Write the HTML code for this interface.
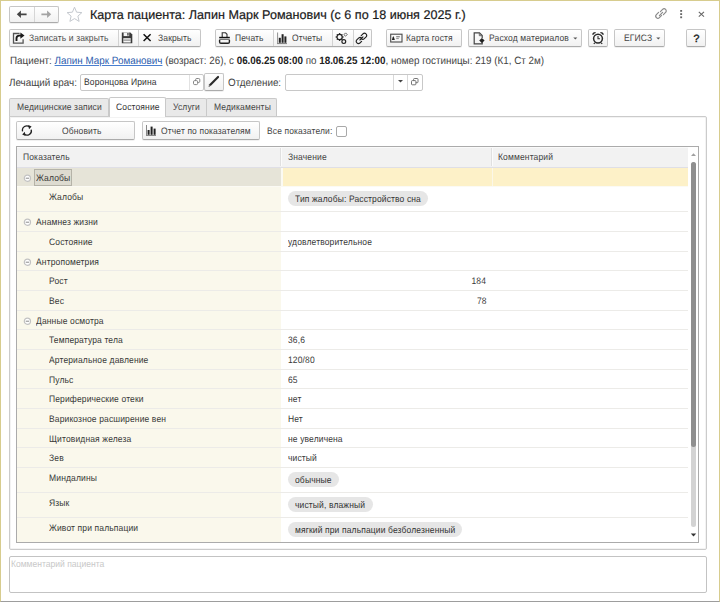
<!DOCTYPE html>
<html><head><meta charset="utf-8"><style>
html,body{margin:0;padding:0;width:720px;height:602px;overflow:hidden;background:#fff}
body{position:relative;font-family:"Liberation Sans", sans-serif;text-rendering:geometricPrecision;}
b{font-weight:700}
</style></head><body>
<div style="position:absolute;left:0;top:0;width:720px;height:602px;box-sizing:border-box;border:1px solid #d7cc8e;border-bottom-color:#9d9d9d;background:#fff"></div>
<div style="position:absolute;left:9px;top:6px;width:50px;height:17px;box-sizing:border-box;border:1px solid #c6c6c6;border-bottom-color:#ababab;border-radius:2px;background:linear-gradient(#ffffff,#f1f1f1);box-shadow:0 1px 0 rgba(0,0,0,0.06);"></div>
<div style="position:absolute;left:34px;top:7px;width:1px;height:15px;background:#d6d6d6"></div>
<svg style="position:absolute;left:16px;top:10px" width="12" height="9" viewBox="0 0 12 9"><path d="M0.8 4.3 L4.9 0.6 L4.9 3.4 L10.6 3.4 L10.6 5.2 L4.9 5.2 L4.9 8.0 Z" fill="#444"/></svg>
<svg style="position:absolute;left:40px;top:10px" width="12" height="9" viewBox="0 0 12 9"><path d="M11.2 4.3 L7.1 0.6 L7.1 3.4 L1.4 3.4 L1.4 5.2 L7.1 5.2 L7.1 8.0 Z" fill="#a3a3a3"/></svg>
<svg style="position:absolute;left:66px;top:6px" width="17" height="17" viewBox="0 0 17 17"><path d="M8.5 1.2 L10.6 6.2 L15.9 6.6 L11.9 10.1 L13.1 15.4 L8.5 12.6 L3.9 15.4 L5.1 10.1 L1.1 6.6 L6.4 6.2 Z" fill="none" stroke="#c5c9cf" stroke-width="1"/></svg>
<div style="position:absolute;left:90px;top:8px;font-size:12.6px;line-height:14.49px;color:#1a1a1a;font-weight:400;white-space:nowrap;-webkit-text-stroke:0.2px #1a1a1a;">Карта пациента: Лапин Марк Романович (с 6 по 18 июня 2025 г.)</div>
<svg style="position:absolute;left:654px;top:7px" width="14" height="13" viewBox="0 0 14 13"><g fill="none" stroke="#8a8a8a" stroke-width="1.2" stroke-linecap="round"><path d="M6.4 4.6 L8.6 2.4 a2.1 2.1 0 0 1 3 3 L9.4 7.6"/><path d="M7.6 8.4 L5.4 10.6 a2.1 2.1 0 0 1 -3 -3 L4.6 5.4"/><path d="M5.4 8.6 L8.6 5.4"/></g></svg>
<svg style="position:absolute;left:679px;top:9px" width="5" height="10" viewBox="0 0 5 10"><g fill="#666"><rect x="1.2" y="1" width="1.9" height="1.8"/><rect x="1.2" y="4.2" width="1.9" height="1.8"/><rect x="1.2" y="7.4" width="1.9" height="1.8"/></g></svg>
<svg style="position:absolute;left:697px;top:10px" width="9" height="8" viewBox="0 0 9 8"><path d="M1.8 1.8 L7.0 6.6 M7.0 1.8 L1.8 6.6" stroke="#666" stroke-width="1.1"/></svg>
<div style="position:absolute;left:9px;top:29px;width:192px;height:18px;box-sizing:border-box;border:1px solid #c6c6c6;border-bottom-color:#ababab;border-radius:2px;background:linear-gradient(#ffffff,#f1f1f1);box-shadow:0 1px 0 rgba(0,0,0,0.06);"></div>
<div style="position:absolute;left:118px;top:30px;width:1px;height:16px;background:#d2d2d2"></div>
<div style="position:absolute;left:138px;top:30px;width:1px;height:16px;background:#d2d2d2"></div>
<div style="position:absolute;left:29px;top:33px;font-size:9.35px;line-height:10.752px;color:#505050;font-weight:400;white-space:nowrap;letter-spacing:0.15px;transform:scaleX(0.9070);transform-origin:0 0;">Записать и закрыть</div>
<div style="position:absolute;left:157.5px;top:33px;font-size:9.35px;line-height:10.752px;color:#444;font-weight:400;white-space:nowrap;letter-spacing:0.15px;transform:scaleX(0.9093);transform-origin:0 0;">Закрыть</div>
<svg style="position:absolute;left:12px;top:32px" width="13" height="12" viewBox="0 0 13 12"><path d="M7.6 1.5 H1.5 V11.1 H11.1 V7.2" fill="none" stroke="#555" stroke-width="1.3"/><path d="M4.5 8.9 V6.2 Q4.5 3.6 7.3 3.6 H9" fill="none" stroke="#1a1a1a" stroke-width="1.9"/><path d="M8.4 0.4 L12.5 3.6 L8.4 6.8 Z" fill="#1a1a1a"/></svg>
<svg style="position:absolute;left:121px;top:32px" width="12" height="12" viewBox="0 0 12 12"><path d="M0.8 0.5 H9.4 L11.3 2.4 V11.3 H0.8 Z" fill="#3a3a3a"/><rect x="2.6" y="0.5" width="5.6" height="3.6" fill="#f4f4f4"/><rect x="6.3" y="1.0" width="1.3" height="2.6" fill="#3a3a3a"/><rect x="2.3" y="6.2" width="7.4" height="4.3" fill="#f6f6f6"/><rect x="2.3" y="7.6" width="7.4" height="1.0" fill="#777"/></svg>
<svg style="position:absolute;left:142px;top:33px" width="10" height="9" viewBox="0 0 10 9"><path d="M1.6 1.2 L8.6 8.0 M8.6 1.2 L1.6 8.0" stroke="#111" stroke-width="1.5"/></svg>
<div style="position:absolute;left:215px;top:29px;width:157px;height:18px;box-sizing:border-box;border:1px solid #c6c6c6;border-bottom-color:#ababab;border-radius:2px;background:linear-gradient(#ffffff,#f1f1f1);box-shadow:0 1px 0 rgba(0,0,0,0.06);"></div>
<div style="position:absolute;left:273px;top:30px;width:1px;height:16px;background:#d2d2d2"></div>
<div style="position:absolute;left:332px;top:30px;width:1px;height:16px;background:#d2d2d2"></div>
<div style="position:absolute;left:353px;top:30px;width:1px;height:16px;background:#d2d2d2"></div>
<div style="position:absolute;left:234.5px;top:33px;font-size:9.35px;line-height:10.752px;color:#444;font-weight:400;white-space:nowrap;letter-spacing:0.15px;transform:scaleX(0.9091);transform-origin:0 0;">Печать</div>
<div style="position:absolute;left:292px;top:33px;font-size:9.35px;line-height:10.752px;color:#444;font-weight:400;white-space:nowrap;letter-spacing:0.15px;transform:scaleX(0.9105);transform-origin:0 0;">Отчеты</div>
<svg style="position:absolute;left:218px;top:31px" width="13" height="14" viewBox="0 0 13 14"><path d="M4.2 6.2 V1.8 H7.6 L9.0 3.3 V6.2" fill="none" stroke="#333" stroke-width="1.1"/><rect x="1.2" y="5.8" width="10.6" height="1.4" fill="#111"/><rect x="1.2" y="7.7" width="10.6" height="1.3" fill="#777"/><path d="M1.6 9 V11 Q1.6 12.3 3 12.3 H10 Q11.4 12.3 11.4 11 V9" fill="none" stroke="#222" stroke-width="1.4"/></svg>
<svg style="position:absolute;left:276px;top:32px" width="12" height="13" viewBox="0 0 12 13"><rect x="1" y="0.5" width="1.1" height="11.5" fill="#999"/><rect x="1" y="11" width="10" height="1.1" fill="#888"/><rect x="2.8" y="5.8" width="2" height="5" fill="#222"/><rect x="5.6" y="2.2" width="2" height="8.6" fill="#222"/><rect x="8.4" y="4.4" width="2" height="6.4" fill="#222"/></svg>
<svg style="position:absolute;left:335px;top:32px" width="13" height="13" viewBox="0 0 13 13"><g fill="none" stroke="#222" stroke-width="1.2"><circle cx="4.6" cy="5.0" r="2.6"/><circle cx="8.8" cy="9.6" r="1.9"/><path d="M8.9 2.6 L10.6 0.9 L12.2 2.5 L10.5 4.2 Z" stroke="#555" stroke-width="0.9"/></g><g fill="#222"><circle cx="4.6" cy="1.7" r="0.8"/><circle cx="4.6" cy="8.3" r="0.8"/><circle cx="1.3" cy="5" r="0.8"/><circle cx="7.9" cy="5" r="0.8"/><circle cx="2.3" cy="2.7" r="0.7"/><circle cx="6.9" cy="2.7" r="0.7"/><circle cx="2.3" cy="7.3" r="0.7"/><circle cx="6.9" cy="7.3" r="0.7"/></g></svg>
<svg style="position:absolute;left:355px;top:32px" width="13" height="13" viewBox="0 0 13 13"><g fill="none" stroke="#222" stroke-width="1.15" stroke-linecap="round"><path d="M6.2 3.6 L8.0 1.8 a2.2 2.2 0 0 1 3.1 3.1 L9.3 6.7 a2.2 2.2 0 0 1 -3.1 0"/><path d="M6.6 9.3 L4.9 11.0 a2.2 2.2 0 0 1 -3.1 -3.1 L3.6 6.1 a2.2 2.2 0 0 1 3.1 0"/><path d="M4.9 8.0 L8.0 4.9"/></g></svg>
<div style="position:absolute;left:386px;top:29px;width:76px;height:18px;box-sizing:border-box;border:1px solid #c6c6c6;border-bottom-color:#ababab;border-radius:2px;background:linear-gradient(#ffffff,#f1f1f1);box-shadow:0 1px 0 rgba(0,0,0,0.06);"></div>
<div style="position:absolute;left:405.5px;top:33px;font-size:9.35px;line-height:10.752px;color:#444;font-weight:400;white-space:nowrap;letter-spacing:0.15px;transform:scaleX(0.9060);transform-origin:0 0;">Карта гостя</div>
<svg style="position:absolute;left:389px;top:33px" width="14" height="10" viewBox="0 0 14 10"><rect x="1.7" y="1.2" width="11.3" height="7.8" fill="none" stroke="#4a4a4a" stroke-width="1.1"/><path d="M2.9 7.0 L3.6 4.6 L4.3 2.9 L5.0 4.6 L5.8 7.0 Z" fill="#222"/><rect x="7.2" y="3.2" width="3.6" height="1.1" fill="#777"/><rect x="7.2" y="5.0" width="2.6" height="1.1" fill="#999"/></svg>
<div style="position:absolute;left:468px;top:29px;width:114px;height:18px;box-sizing:border-box;border:1px solid #c6c6c6;border-bottom-color:#ababab;border-radius:2px;background:linear-gradient(#ffffff,#f1f1f1);box-shadow:0 1px 0 rgba(0,0,0,0.06);"></div>
<div style="position:absolute;left:488.8px;top:33px;font-size:9.35px;line-height:10.752px;color:#444;font-weight:400;white-space:nowrap;letter-spacing:0.15px;transform:scaleX(0.9087);transform-origin:0 0;">Расход материалов</div>
<svg style="position:absolute;left:473px;top:32px" width="12" height="13" viewBox="0 0 12 13"><path d="M9.2 6 V3.5 L6.5 0.8 H1.2 V11.9 H9.2 V9.8" fill="none" stroke="#444" stroke-width="1.2"/><path d="M6.3 0.8 V3.7 H9.2" fill="none" stroke="#666" stroke-width="1"/><path d="M8.9 5.9 L11.6 8.4 L8.9 10.9 L6.2 8.4 Z" fill="#222"/></svg>
<svg style="position:absolute;left:572px;top:36px" width="7" height="5" viewBox="0 0 7 5"><path d="M1.3 1.6 H5.3 L3.3 3.6 Z" fill="#555"/></svg>
<div style="position:absolute;left:588px;top:29px;width:20px;height:18px;box-sizing:border-box;border:1px solid #c6c6c6;border-bottom-color:#ababab;border-radius:2px;background:linear-gradient(#ffffff,#f1f1f1);box-shadow:0 1px 0 rgba(0,0,0,0.06);"></div>
<svg style="position:absolute;left:591px;top:31px" width="14" height="14" viewBox="0 0 14 14"><circle cx="7" cy="7.6" r="4.4" fill="none" stroke="#2a2a2a" stroke-width="1.5"/><path d="M7 5.0 V7.8 H9" fill="none" stroke="#333" stroke-width="1.1"/><path d="M1.6 3.6 Q2.6 1.4 4.6 1.6" fill="none" stroke="#2a2a2a" stroke-width="1.4"/><path d="M12.4 3.6 Q11.4 1.4 9.4 1.6" fill="none" stroke="#2a2a2a" stroke-width="1.4"/><path d="M3.8 11.8 L2.8 12.9 M10.2 11.8 L11.2 12.9" stroke="#2a2a2a" stroke-width="1.2"/></svg>
<div style="position:absolute;left:614px;top:29px;width:51px;height:18px;box-sizing:border-box;border:1px solid #c6c6c6;border-bottom-color:#ababab;border-radius:2px;background:linear-gradient(#ffffff,#f1f1f1);box-shadow:0 1px 0 rgba(0,0,0,0.06);"></div>
<div style="position:absolute;left:623.8px;top:33px;font-size:9.35px;line-height:10.752px;color:#444;font-weight:400;white-space:nowrap;letter-spacing:0.15px;transform:scaleX(0.9132);transform-origin:0 0;">ЕГИСЗ</div>
<svg style="position:absolute;left:655px;top:36px" width="7" height="5" viewBox="0 0 7 5"><path d="M1.3 1.6 H5.3 L3.3 3.6 Z" fill="#555"/></svg>
<div style="position:absolute;left:686px;top:29px;width:20px;height:18px;box-sizing:border-box;border:1px solid #c6c6c6;border-bottom-color:#ababab;border-radius:2px;background:linear-gradient(#ffffff,#f1f1f1);box-shadow:0 1px 0 rgba(0,0,0,0.06);"></div>
<div style="position:absolute;left:693.6px;top:33px;font-size:10.6px;line-height:12.19px;color:#222;font-weight:400;white-space:nowrap;-webkit-text-stroke:0.45px #222;">?</div>
<div style="position:absolute;left:10px;top:55px;font-size:10.6px;line-height:12.19px;color:#444;font-weight:400;white-space:nowrap;letter-spacing:0px;transform:scaleX(0.9292);transform-origin:0 0;">Пациент: <span style="color:#2c5cad;text-decoration:underline;text-decoration-color:#4a7fd0">Лапин Марк Романович</span> (возраст: 26), с <b style="color:#222">06.06.25 08:00</b> по <b style="color:#222">18.06.25 12:00</b>, номер гостиницы: 219 (К1, Ст 2м)</div>
<div style="position:absolute;left:9.2px;top:77px;font-size:10.6px;line-height:12.19px;color:#444;font-weight:400;white-space:nowrap;letter-spacing:0px;transform:scaleX(0.9292);transform-origin:0 0;">Лечащий врач:</div>
<div style="position:absolute;left:80px;top:73.5px;width:124px;height:17px;box-sizing:border-box;border:1px solid #c8c8c8;border-radius:2px;background:#fff;"></div>
<div style="position:absolute;left:189px;top:74.5px;width:1px;height:15px;background:#e2e2e2"></div>
<svg style="position:absolute;left:192px;top:77px" width="10" height="10" viewBox="0 0 10 10"><g fill="none" stroke="#777" stroke-width="0.9"><rect x="3.6" y="1.5" width="4.2" height="4" rx="1.2"/><rect x="1.5" y="3.6" width="4.2" height="4" rx="1.2" fill="#fff"/></g></svg>
<div style="position:absolute;left:83.8px;top:77px;font-size:9.35px;line-height:10.752px;color:#333;font-weight:400;white-space:nowrap;letter-spacing:0.15px;transform:scaleX(0.9095);transform-origin:0 0;">Воронцова Ирина</div>
<div style="position:absolute;left:204px;top:73px;width:20px;height:18px;box-sizing:border-box;border:1px solid #c6c6c6;border-bottom-color:#ababab;border-radius:2px;background:linear-gradient(#ffffff,#f1f1f1);box-shadow:0 1px 0 rgba(0,0,0,0.06);"></div>
<svg style="position:absolute;left:207px;top:74px" width="14" height="14" viewBox="0 0 14 14"><path d="M1.6 12.7 L2.3 10.2 L10.3 2.2 Q11.1 1.5 11.8 2.2 Q12.5 2.9 11.8 3.7 L3.9 11.7 Z" fill="#2a2a2a"/><path d="M1.6 12.7 L2.3 10.2 L3.9 11.7 Z" fill="#777"/></svg>
<div style="position:absolute;left:227.6px;top:77px;font-size:10.6px;line-height:12.19px;color:#444;font-weight:400;white-space:nowrap;letter-spacing:0px;transform:scaleX(0.9292);transform-origin:0 0;">Отделение:</div>
<div style="position:absolute;left:285px;top:73.5px;width:138px;height:17px;box-sizing:border-box;border:1px solid #c8c8c8;border-radius:2px;background:#fff;"></div>
<div style="position:absolute;left:393px;top:74.5px;width:1px;height:15px;background:#d8d8d8"></div>
<div style="position:absolute;left:407px;top:74.5px;width:1px;height:15px;background:#d8d8d8"></div>
<svg style="position:absolute;left:397px;top:79px" width="7" height="5" viewBox="0 0 7 5"><path d="M1 1 H6 L3.5 3.6 Z" fill="#444"/></svg>
<svg style="position:absolute;left:410px;top:77px" width="10" height="10" viewBox="0 0 10 10"><g fill="none" stroke="#666" stroke-width="0.9"><rect x="3.6" y="1.5" width="4.4" height="4.2" rx="0.8"/><rect x="1.5" y="3.6" width="4.4" height="4.2" rx="0.8" fill="#fff"/></g></svg>
<div style="position:absolute;left:9px;top:97.5px;width:100px;height:19px;box-sizing:border-box;border:1px solid #c9c9c9;border-bottom:none;border-radius:2px 2px 0 0;background:#e9e9e9"></div>
<div style="position:absolute;left:165px;top:97.5px;width:42px;height:19px;box-sizing:border-box;border:1px solid #c9c9c9;border-bottom:none;border-radius:2px 2px 0 0;background:#e9e9e9"></div>
<div style="position:absolute;left:206px;top:97.5px;width:71px;height:19px;box-sizing:border-box;border:1px solid #c9c9c9;border-bottom:none;border-radius:2px 2px 0 0;background:#e9e9e9"></div>
<div style="position:absolute;left:9px;top:116px;width:698px;height:434px;box-sizing:border-box;border:1px solid #cbcbcb;border-radius:0 2px 2px 2px;box-shadow:inset 0 0 0 1px #f3f3f3;background:#fff"></div>
<div style="position:absolute;left:108.5px;top:97px;width:57px;height:20px;box-sizing:border-box;border:1px solid #c9c9c9;border-bottom:none;border-radius:2px 2px 0 0;background:#fff"></div>
<div style="position:absolute;left:16.7px;top:102px;font-size:9.35px;line-height:10.752px;color:#444;font-weight:400;white-space:nowrap;letter-spacing:0.15px;transform:scaleX(0.9088);transform-origin:0 0;">Медицинские записи</div>
<div style="position:absolute;left:115.8px;top:102px;font-size:9.35px;line-height:10.752px;color:#333;font-weight:400;white-space:nowrap;letter-spacing:0.15px;transform:scaleX(0.9095);transform-origin:0 0;">Состояние</div>
<div style="position:absolute;left:172.6px;top:102px;font-size:9.35px;line-height:10.752px;color:#444;font-weight:400;white-space:nowrap;letter-spacing:0.15px;transform:scaleX(0.9074);transform-origin:0 0;">Услуги</div>
<div style="position:absolute;left:214px;top:102px;font-size:9.35px;line-height:10.752px;color:#444;font-weight:400;white-space:nowrap;letter-spacing:0.15px;transform:scaleX(0.9111);transform-origin:0 0;">Медикаменты</div>
<div style="position:absolute;left:16px;top:121px;width:119px;height:18.5px;box-sizing:border-box;border:1px solid #c6c6c6;border-bottom-color:#ababab;border-radius:2px;background:linear-gradient(#ffffff,#f1f1f1);box-shadow:0 1px 0 rgba(0,0,0,0.06);"></div>
<svg style="position:absolute;left:21px;top:124px" width="12" height="13" viewBox="0 0 12 13"><g fill="none" stroke="#222" stroke-width="1.3"><path d="M1.6 7.4 A4.3 4.3 0 0 1 8.6 3.0"/><path d="M10.2 5.6 A4.3 4.3 0 0 1 3.2 10.0"/></g><path d="M7.3 1.0 L10.6 2.4 L8.0 5.2 Z" fill="#222"/><path d="M4.5 12.0 L1.2 10.6 L3.8 7.8 Z" fill="#222"/></svg>
<div style="position:absolute;left:61.5px;top:126px;font-size:9.35px;line-height:10.752px;color:#444;font-weight:400;white-space:nowrap;letter-spacing:0.15px;transform:scaleX(0.9100);transform-origin:0 0;">Обновить</div>
<div style="position:absolute;left:142px;top:121px;width:118px;height:18.5px;box-sizing:border-box;border:1px solid #c6c6c6;border-bottom-color:#ababab;border-radius:2px;background:linear-gradient(#ffffff,#f1f1f1);box-shadow:0 1px 0 rgba(0,0,0,0.06);"></div>
<svg style="position:absolute;left:145px;top:124px" width="12" height="13" viewBox="0 0 12 13"><rect x="1" y="1" width="1" height="10.8" fill="#888"/><rect x="1" y="11" width="10" height="1" fill="#888"/><rect x="2.6" y="6" width="2" height="4.8" fill="#222"/><rect x="5.6" y="2.6" width="2" height="8.2" fill="#222"/><rect x="8.6" y="4.6" width="2" height="6.2" fill="#222"/></svg>
<div style="position:absolute;left:161.3px;top:126px;font-size:9.35px;line-height:10.752px;color:#444;font-weight:400;white-space:nowrap;letter-spacing:0.15px;transform:scaleX(0.9075);transform-origin:0 0;">Отчет по показателям</div>
<div style="position:absolute;left:266.7px;top:126px;font-size:9.35px;line-height:10.752px;color:#444;font-weight:400;white-space:nowrap;letter-spacing:0.15px;transform:scaleX(0.9067);transform-origin:0 0;">Все показатели:</div>
<div style="position:absolute;left:336px;top:125.5px;width:11px;height:11px;box-sizing:border-box;border:1px solid #a9a9a9;border-radius:2px;background:#fff"></div>
<div style="position:absolute;left:16px;top:146px;width:683px;height:397px;box-sizing:border-box;border:1px solid #ababab;background:#fff"></div>
<div style="position:absolute;left:17px;top:147px;width:671px;height:21px;background:#f2f2f2;border-top:1px solid #fafafa;border-bottom:1px solid #dfdfe6;box-sizing:border-box"></div>
<div style="position:absolute;left:281px;top:148px;width:1px;height:18px;background:#fbfbfb;box-shadow:-1px 0 0 #e0e0e0"></div>
<div style="position:absolute;left:492px;top:148px;width:1px;height:18px;background:#fbfbfb;box-shadow:-1px 0 0 #e0e0e0"></div>
<div style="position:absolute;left:22.5px;top:152px;font-size:9.35px;line-height:10.752px;color:#444;font-weight:400;white-space:nowrap;letter-spacing:0.15px;transform:scaleX(0.9086);transform-origin:0 0;">Показатель</div>
<div style="position:absolute;left:287.8px;top:152px;font-size:9.35px;line-height:10.752px;color:#444;font-weight:400;white-space:nowrap;letter-spacing:0.15px;transform:scaleX(0.9095);transform-origin:0 0;">Значение</div>
<div style="position:absolute;left:497.8px;top:152px;font-size:9.35px;line-height:10.752px;color:#444;font-weight:400;white-space:nowrap;letter-spacing:0.15px;transform:scaleX(0.9103);transform-origin:0 0;">Комментарий</div>
<div style="position:absolute;left:17px;top:168px;width:264px;height:19px;background:#e6e4d8"></div>
<div style="position:absolute;left:281px;top:168px;width:407px;height:19px;background:#fdf1c8"></div>
<div style="position:absolute;left:281px;top:168px;width:1.5px;height:18px;background:#fbfaf3"></div>
<div style="position:absolute;left:492px;top:168px;width:1px;height:18px;background:#fbf7e8"></div>
<div style="position:absolute;left:17px;top:187px;width:264px;height:25px;background:#faf8ec"></div>
<div style="position:absolute;left:281px;top:187px;width:407px;height:25px;background:#ffffff"></div>
<div style="position:absolute;left:17px;top:212px;width:264px;height:20px;background:#faf8ec"></div>
<div style="position:absolute;left:281px;top:212px;width:407px;height:20px;background:#ffffff"></div>
<div style="position:absolute;left:17px;top:232px;width:264px;height:20px;background:#faf8ec"></div>
<div style="position:absolute;left:281px;top:232px;width:407px;height:20px;background:#ffffff"></div>
<div style="position:absolute;left:17px;top:252px;width:264px;height:19px;background:#faf8ec"></div>
<div style="position:absolute;left:281px;top:252px;width:407px;height:19px;background:#ffffff"></div>
<div style="position:absolute;left:17px;top:271px;width:264px;height:20px;background:#faf8ec"></div>
<div style="position:absolute;left:281px;top:271px;width:407px;height:20px;background:#ffffff"></div>
<div style="position:absolute;left:17px;top:291px;width:264px;height:20px;background:#faf8ec"></div>
<div style="position:absolute;left:281px;top:291px;width:407px;height:20px;background:#ffffff"></div>
<div style="position:absolute;left:17px;top:311px;width:264px;height:19px;background:#faf8ec"></div>
<div style="position:absolute;left:281px;top:311px;width:407px;height:19px;background:#ffffff"></div>
<div style="position:absolute;left:17px;top:330px;width:264px;height:20px;background:#faf8ec"></div>
<div style="position:absolute;left:281px;top:330px;width:407px;height:20px;background:#ffffff"></div>
<div style="position:absolute;left:17px;top:350px;width:264px;height:20px;background:#faf8ec"></div>
<div style="position:absolute;left:281px;top:350px;width:407px;height:20px;background:#ffffff"></div>
<div style="position:absolute;left:17px;top:370px;width:264px;height:19px;background:#faf8ec"></div>
<div style="position:absolute;left:281px;top:370px;width:407px;height:19px;background:#ffffff"></div>
<div style="position:absolute;left:17px;top:389px;width:264px;height:20px;background:#faf8ec"></div>
<div style="position:absolute;left:281px;top:389px;width:407px;height:20px;background:#ffffff"></div>
<div style="position:absolute;left:17px;top:409px;width:264px;height:20px;background:#faf8ec"></div>
<div style="position:absolute;left:281px;top:409px;width:407px;height:20px;background:#ffffff"></div>
<div style="position:absolute;left:17px;top:429px;width:264px;height:19px;background:#faf8ec"></div>
<div style="position:absolute;left:281px;top:429px;width:407px;height:19px;background:#ffffff"></div>
<div style="position:absolute;left:17px;top:448px;width:264px;height:20px;background:#faf8ec"></div>
<div style="position:absolute;left:281px;top:448px;width:407px;height:20px;background:#ffffff"></div>
<div style="position:absolute;left:17px;top:468px;width:264px;height:25px;background:#faf8ec"></div>
<div style="position:absolute;left:281px;top:468px;width:407px;height:25px;background:#ffffff"></div>
<div style="position:absolute;left:17px;top:493px;width:264px;height:25px;background:#faf8ec"></div>
<div style="position:absolute;left:281px;top:493px;width:407px;height:25px;background:#ffffff"></div>
<div style="position:absolute;left:17px;top:518px;width:264px;height:24px;background:#faf8ec"></div>
<div style="position:absolute;left:281px;top:518px;width:407px;height:24px;background:#ffffff"></div>
<div style="position:absolute;left:17px;top:186px;width:671px;height:1px;background:#fbfaf4"></div>
<div style="position:absolute;left:17px;top:211px;width:671px;height:1px;background:#ecebe8"></div>
<div style="position:absolute;left:17px;top:231px;width:671px;height:1px;background:#ecebe8"></div>
<div style="position:absolute;left:17px;top:251px;width:671px;height:1px;background:#ecebe8"></div>
<div style="position:absolute;left:17px;top:270px;width:671px;height:1px;background:#ecebe8"></div>
<div style="position:absolute;left:17px;top:290px;width:671px;height:1px;background:#ecebe8"></div>
<div style="position:absolute;left:17px;top:310px;width:671px;height:1px;background:#ecebe8"></div>
<div style="position:absolute;left:17px;top:329px;width:671px;height:1px;background:#ecebe8"></div>
<div style="position:absolute;left:17px;top:349px;width:671px;height:1px;background:#ecebe8"></div>
<div style="position:absolute;left:17px;top:369px;width:671px;height:1px;background:#ecebe8"></div>
<div style="position:absolute;left:17px;top:388px;width:671px;height:1px;background:#ecebe8"></div>
<div style="position:absolute;left:17px;top:408px;width:671px;height:1px;background:#ecebe8"></div>
<div style="position:absolute;left:17px;top:428px;width:671px;height:1px;background:#ecebe8"></div>
<div style="position:absolute;left:17px;top:447px;width:671px;height:1px;background:#ecebe8"></div>
<div style="position:absolute;left:17px;top:467px;width:671px;height:1px;background:#ecebe8"></div>
<div style="position:absolute;left:17px;top:492px;width:671px;height:1px;background:#ecebe8"></div>
<div style="position:absolute;left:17px;top:517px;width:671px;height:1px;background:#ecebe8"></div>
<svg style="position:absolute;left:23px;top:173.5px" width="9" height="9" viewBox="0 0 9 9"><circle cx="4.4" cy="4.2" r="3.1" fill="#fff" stroke="#c2c2c2" stroke-width="1.2"/><rect x="2.7" y="3.7" width="3.4" height="1.0" fill="#8a8a8a"/></svg>
<div style="position:absolute;left:34px;top:169px;width:38px;height:17px;box-sizing:border-box;border:1px solid #b5b3a8;background:#dddbd0"></div>
<div style="position:absolute;left:36.2px;top:173px;font-size:9.35px;line-height:10.752px;color:#383838;font-weight:400;white-space:nowrap;letter-spacing:0.15px;transform:scaleX(0.9135);transform-origin:0 0;">Жалобы</div>
<div style="position:absolute;left:49px;top:192px;font-size:9.35px;line-height:10.752px;color:#383838;font-weight:400;white-space:nowrap;letter-spacing:0.15px;transform:scaleX(0.9135);transform-origin:0 0;">Жалобы</div>
<div style="position:absolute;left:288px;top:190.7px;width:140.2px;height:15.7px;border-radius:8px;background:#e6e6e6"></div>
<div style="position:absolute;left:295px;top:194px;font-size:9.35px;line-height:10.752px;color:#333;font-weight:400;white-space:nowrap;letter-spacing:0.15px;transform:scaleX(0.9075);transform-origin:0 0;">Тип жалобы: Расстройство сна</div>
<svg style="position:absolute;left:23px;top:217.5px" width="9" height="9" viewBox="0 0 9 9"><circle cx="4.4" cy="4.2" r="3.1" fill="#fff" stroke="#c2c2c2" stroke-width="1.2"/><rect x="2.7" y="3.7" width="3.4" height="1.0" fill="#8a8a8a"/></svg>
<div style="position:absolute;left:36.2px;top:217px;font-size:9.35px;line-height:10.752px;color:#383838;font-weight:400;white-space:nowrap;letter-spacing:0.15px;transform:scaleX(0.9091);transform-origin:0 0;">Анамнез жизни</div>
<div style="position:absolute;left:49px;top:237px;font-size:9.35px;line-height:10.752px;color:#383838;font-weight:400;white-space:nowrap;letter-spacing:0.15px;transform:scaleX(0.9095);transform-origin:0 0;">Состояние</div>
<div style="position:absolute;left:287.7px;top:237px;font-size:9.35px;line-height:10.752px;color:#383838;font-weight:400;white-space:nowrap;letter-spacing:0.15px;transform:scaleX(0.9085);transform-origin:0 0;">удовлетворительное</div>
<svg style="position:absolute;left:23px;top:257.5px" width="9" height="9" viewBox="0 0 9 9"><circle cx="4.4" cy="4.2" r="3.1" fill="#fff" stroke="#c2c2c2" stroke-width="1.2"/><rect x="2.7" y="3.7" width="3.4" height="1.0" fill="#8a8a8a"/></svg>
<div style="position:absolute;left:36.2px;top:257px;font-size:9.35px;line-height:10.752px;color:#383838;font-weight:400;white-space:nowrap;letter-spacing:0.15px;transform:scaleX(0.9095);transform-origin:0 0;">Антропометрия</div>
<div style="position:absolute;left:49px;top:276px;font-size:9.35px;line-height:10.752px;color:#383838;font-weight:400;white-space:nowrap;letter-spacing:0.15px;transform:scaleX(0.9085);transform-origin:0 0;">Рост</div>
<div style="position:absolute;right:233.5px;top:276px;font-size:9.35px;line-height:10.752px;color:#383838;font-weight:400;white-space:nowrap;letter-spacing:0.15px;transform:scaleX(0.9096);transform-origin:100% 0;">184</div>
<div style="position:absolute;left:49px;top:296px;font-size:9.35px;line-height:10.752px;color:#383838;font-weight:400;white-space:nowrap;letter-spacing:0.15px;transform:scaleX(0.9104);transform-origin:0 0;">Вес</div>
<div style="position:absolute;right:233.5px;top:296px;font-size:9.35px;line-height:10.752px;color:#383838;font-weight:400;white-space:nowrap;letter-spacing:0.15px;transform:scaleX(0.9096);transform-origin:100% 0;">78</div>
<svg style="position:absolute;left:23px;top:316.5px" width="9" height="9" viewBox="0 0 9 9"><circle cx="4.4" cy="4.2" r="3.1" fill="#fff" stroke="#c2c2c2" stroke-width="1.2"/><rect x="2.7" y="3.7" width="3.4" height="1.0" fill="#8a8a8a"/></svg>
<div style="position:absolute;left:36.2px;top:316px;font-size:9.35px;line-height:10.752px;color:#383838;font-weight:400;white-space:nowrap;letter-spacing:0.15px;transform:scaleX(0.9094);transform-origin:0 0;">Данные осмотра</div>
<div style="position:absolute;left:49px;top:335px;font-size:9.35px;line-height:10.752px;color:#383838;font-weight:400;white-space:nowrap;letter-spacing:0.15px;transform:scaleX(0.9082);transform-origin:0 0;">Температура тела</div>
<div style="position:absolute;left:287.7px;top:335px;font-size:9.35px;line-height:10.752px;color:#383838;font-weight:400;white-space:nowrap;letter-spacing:0.15px;transform:scaleX(0.9060);transform-origin:0 0;">36,6</div>
<div style="position:absolute;left:49px;top:355px;font-size:9.35px;line-height:10.752px;color:#383838;font-weight:400;white-space:nowrap;letter-spacing:0.15px;transform:scaleX(0.9089);transform-origin:0 0;">Артериальное давление</div>
<div style="position:absolute;left:287.7px;top:355px;font-size:9.35px;line-height:10.752px;color:#383838;font-weight:400;white-space:nowrap;letter-spacing:0.15px;transform:scaleX(0.9073);transform-origin:0 0;">120/80</div>
<div style="position:absolute;left:49px;top:375px;font-size:9.35px;line-height:10.752px;color:#383838;font-weight:400;white-space:nowrap;letter-spacing:0.15px;transform:scaleX(0.9098);transform-origin:0 0;">Пульс</div>
<div style="position:absolute;left:287.7px;top:375px;font-size:9.35px;line-height:10.752px;color:#383838;font-weight:400;white-space:nowrap;letter-spacing:0.15px;transform:scaleX(0.9096);transform-origin:0 0;">65</div>
<div style="position:absolute;left:49px;top:394px;font-size:9.35px;line-height:10.752px;color:#383838;font-weight:400;white-space:nowrap;letter-spacing:0.15px;transform:scaleX(0.9089);transform-origin:0 0;">Периферические отеки</div>
<div style="position:absolute;left:287.7px;top:394px;font-size:9.35px;line-height:10.752px;color:#383838;font-weight:400;white-space:nowrap;letter-spacing:0.15px;transform:scaleX(0.9073);transform-origin:0 0;">нет</div>
<div style="position:absolute;left:49px;top:414px;font-size:9.35px;line-height:10.752px;color:#383838;font-weight:400;white-space:nowrap;letter-spacing:0.15px;transform:scaleX(0.9086);transform-origin:0 0;">Варикозное расширение вен</div>
<div style="position:absolute;left:287.7px;top:414px;font-size:9.35px;line-height:10.752px;color:#383838;font-weight:400;white-space:nowrap;letter-spacing:0.15px;transform:scaleX(0.9101);transform-origin:0 0;">Нет</div>
<div style="position:absolute;left:49px;top:434px;font-size:9.35px;line-height:10.752px;color:#383838;font-weight:400;white-space:nowrap;letter-spacing:0.15px;transform:scaleX(0.9095);transform-origin:0 0;">Щитовидная железа</div>
<div style="position:absolute;left:287.7px;top:434px;font-size:9.35px;line-height:10.752px;color:#383838;font-weight:400;white-space:nowrap;letter-spacing:0.15px;transform:scaleX(0.9079);transform-origin:0 0;">не увеличена</div>
<div style="position:absolute;left:49px;top:453px;font-size:9.35px;line-height:10.752px;color:#383838;font-weight:400;white-space:nowrap;letter-spacing:0.15px;transform:scaleX(0.9099);transform-origin:0 0;">Зев</div>
<div style="position:absolute;left:287.7px;top:453px;font-size:9.35px;line-height:10.752px;color:#383838;font-weight:400;white-space:nowrap;letter-spacing:0.15px;transform:scaleX(0.9094);transform-origin:0 0;">чистый</div>
<div style="position:absolute;left:49px;top:473px;font-size:9.35px;line-height:10.752px;color:#383838;font-weight:400;white-space:nowrap;letter-spacing:0.15px;transform:scaleX(0.9119);transform-origin:0 0;">Миндалины</div>
<div style="position:absolute;left:288px;top:471.7px;width:50.8px;height:15.7px;border-radius:8px;background:#e6e6e6"></div>
<div style="position:absolute;left:295px;top:475px;font-size:9.35px;line-height:10.752px;color:#333;font-weight:400;white-space:nowrap;letter-spacing:0.15px;transform:scaleX(0.9114);transform-origin:0 0;">обычные</div>
<div style="position:absolute;left:49px;top:498px;font-size:9.35px;line-height:10.752px;color:#383838;font-weight:400;white-space:nowrap;letter-spacing:0.15px;transform:scaleX(0.9108);transform-origin:0 0;">Язык</div>
<div style="position:absolute;left:288px;top:496.7px;width:84.7px;height:15.7px;border-radius:8px;background:#e6e6e6"></div>
<div style="position:absolute;left:295px;top:500px;font-size:9.35px;line-height:10.752px;color:#333;font-weight:400;white-space:nowrap;letter-spacing:0.15px;transform:scaleX(0.9086);transform-origin:0 0;">чистый, влажный</div>
<div style="position:absolute;left:49px;top:523px;font-size:9.35px;line-height:10.752px;color:#383838;font-weight:400;white-space:nowrap;letter-spacing:0.15px;transform:scaleX(0.9087);transform-origin:0 0;">Живот при пальпации</div>
<div style="position:absolute;left:288px;top:521.7px;width:173.5px;height:15.7px;border-radius:8px;background:#e6e6e6"></div>
<div style="position:absolute;left:295px;top:525px;font-size:9.35px;line-height:10.752px;color:#333;font-weight:400;white-space:nowrap;letter-spacing:0.15px;transform:scaleX(0.9080);transform-origin:0 0;">мягкий при пальпации безболезненный</div>
<svg style="position:absolute;left:690px;top:152px" width="7" height="5" viewBox="0 0 7 5"><path d="M1.0 4.0 L3.5 1.2 L6.0 4.0 Z" fill="#a0a0a0"/></svg>
<div style="position:absolute;left:691px;top:162px;width:5px;height:364.5px;background:#d3d3d3;border-radius:2.5px"></div>
<div style="position:absolute;left:691px;top:162px;width:5px;height:285px;background:#8f8f8f;border-radius:2.5px"></div>
<svg style="position:absolute;left:690px;top:532px" width="7" height="6" viewBox="0 0 7 6"><path d="M0.8 1.4 L3.5 4.4 L6.2 1.4 Z" fill="#333"/></svg>
<div style="position:absolute;left:9px;top:556px;width:698px;height:37px;box-sizing:border-box;border:1px solid #c3c3c3;border-radius:2px;background:#fff"></div>
<div style="position:absolute;left:10.8px;top:560px;font-size:9.5px;line-height:10.925px;color:#c8c8c8;font-weight:400;white-space:nowrap;letter-spacing:0px;transform:scaleX(0.9000);transform-origin:0 0;">Комментарий пациента</div>
</body></html>
